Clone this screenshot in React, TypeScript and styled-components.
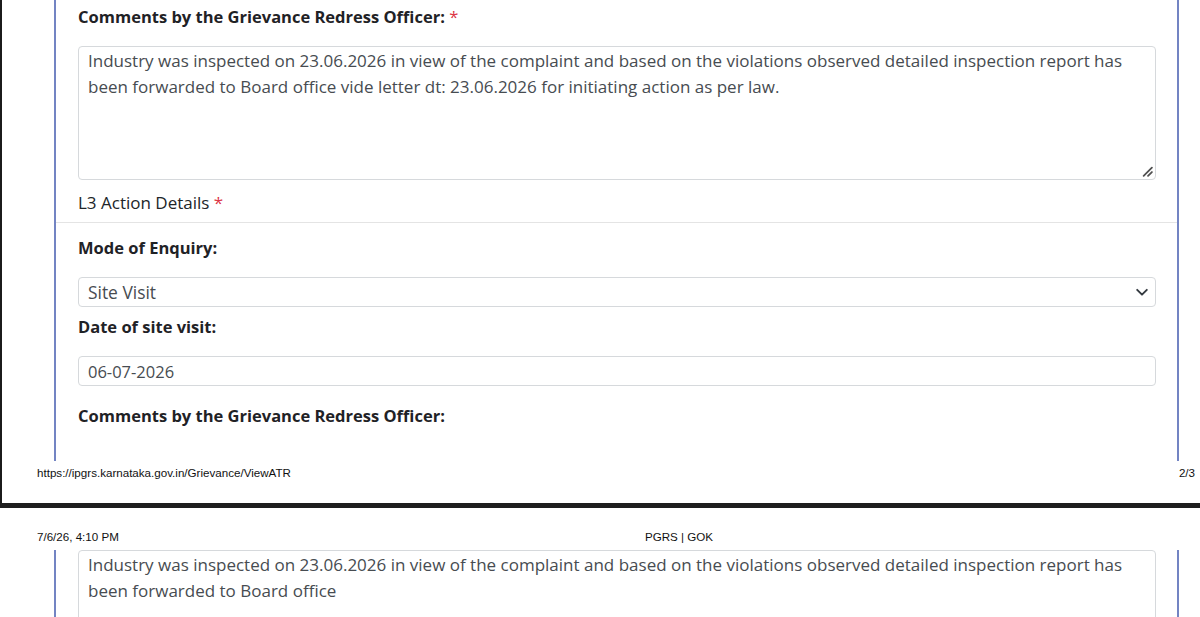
import React, { useState } from "react";
import styled, { createGlobalStyle } from "styled-components";

const GlobalStyle = createGlobalStyle`
    html, body {
        margin: 0;
        padding: 0;
        background: #ffffff;
    }
    #root {
        width: 1200px;
        height: 617px;
        overflow: hidden;
    }
`

const formFont = `"Open Sans", "Noto Sans", sans-serif`
const printFont = `"Liberation Sans", Arial, sans-serif`

const comment =
    "Industry was inspected on 23.06.2026 in view of the complaint and based on the violations observed detailed inspection report has been forwarded to Board office vide letter dt: 23.06.2026 for initiating action as per law."

const commentCut =
    "Industry was inspected on 23.06.2026 in view of the complaint and based on the violations observed detailed inspection report has been forwarded to Board office"

export default function App() {
    const [mode, setMode] = useState('site')
    const [visitDate, setVisitDate] = useState('06-07-2026')
    const [remark, setRemark] = useState(comment)

    return (
        <Viewer>
            <GlobalStyle />

            <PageTop>
                <Card>
                    <Label>
                        Comments by the Grievance Redress Officer: <Required>*</Required>
                    </Label>
                    <AreaWrap>
                        <TextArea
                            height={134}
                            value={remark}
                            onChange={(e) => setRemark(e.target.value)}
                        />
                        <Grip viewBox="0 0 10 10">
                            <path d="M9 1.5 1.5 9M9 5.5 5.5 9" />
                        </Grip>
                    </AreaWrap>

                    <CardHeader>
                        L3 Action Details <Required>*</Required>
                    </CardHeader>

                    <Label top={13}>Mode of Enquiry:</Label>
                    <SelectWrap>
                        <Select value={mode} onChange={(e) => setMode(e.target.value)}>
                            <option value="site">Site Visit</option>
                            <option value="phone">Phone Call</option>
                            <option value="office">Office Enquiry</option>
                        </Select>
                        <Chevron viewBox="0 0 16 16">
                            <path d="M2.5 5.5 8 11l5.5-5.5" />
                        </Chevron>
                    </SelectWrap>

                    <Label top={8}>Date of site visit:</Label>
                    <Input value={visitDate} onChange={(e) => setVisitDate(e.target.value)} />

                    <Label top={18}>Comments by the Grievance Redress Officer:</Label>
                </Card>

                <PrintFooter>
                    <span>https://ipgrs.karnataka.gov.in/Grievance/ViewATR</span>
                    <span>2/3</span>
                </PrintFooter>
            </PageTop>

            <PageBreak />

            <PageBottom>
                <PrintHeader>
                    <span>7/6/26, 4:10 PM</span>
                    <span>PGRS | GOK</span>
                </PrintHeader>
                <Card flush>
                    <TextArea height={120} defaultValue={commentCut} />
                </Card>
            </PageBottom>
        </Viewer>
    )
}


const Viewer = styled.div`
    display: flex;
    flex-direction: column;
    width: 1200px;
    height: 617px;
    background: #ffffff;
`

const PageTop = styled.div`
    display: flex;
    flex-direction: column;
    height: 503px;
    border-left: 2px solid #1b1b1b;
    box-sizing: border-box;
`

const PageBreak = styled.div`
    height: 5px;
    background: #1e1e1e;
    flex-shrink: 0;
`

const PageBottom = styled.div`
    display: flex;
    flex-direction: column;
    flex: 1;
    overflow: hidden;
`

const Card = styled.div<{ flush?: boolean }>`
    display: flex;
    flex-direction: column;
    margin-left: ${props => props.flush ? '54px' : '52px'};
    width: 1125px;
    height: ${props => props.flush ? 'auto' : '461px'};
    flex: ${props => props.flush ? '1' : 'none'};
    padding: ${props => props.flush ? '0' : '5px'} 21px 0 22px;
    box-sizing: border-box;
    border-left: 2px solid #7384c3;
    border-right: 2px solid #7384c3;
    overflow: hidden;
`

const Label = styled.label<{ top?: number }>`
    display: block;
    margin: ${props => props.top || 0}px 0 17px;
    font-family: ${formFont};
    font-size: 16.5px;
    font-weight: 700;
    line-height: 24px;
    color: #1f2226;
`

const Required = styled.span`
    color: #dc3545;
    font-weight: 400;
`

const CardHeader = styled.div`
    margin: 4px -21px 0 -22px;
    padding: 7px 22px;
    border-bottom: 1px solid #e4e4e4;
    font-family: ${formFont};
    font-size: 17px;
    line-height: 24px;
    color: #212529;
`

const AreaWrap = styled.div`
    position: relative;
    flex-shrink: 0;
`

const TextArea = styled.textarea<{ height: number }>`
    display: block;
    width: 100%;
    height: ${props => props.height}px;
    flex-shrink: 0;
    margin: 0;
    padding: 1px 9px;
    box-sizing: border-box;
    border: 1px solid #d6d9dc;
    border-radius: 4px;
    font-family: ${formFont};
    font-size: 17px;
    line-height: 26px;
    color: #474c51;
    background: #ffffff;
    resize: none;
    outline: none;
`

const Grip = styled.svg`
    position: absolute;
    right: 3px;
    bottom: 3px;
    width: 11px;
    height: 11px;
    fill: none;
    stroke: #505050;
    stroke-width: 1.6;
    stroke-linecap: round;
    pointer-events: none;
`

const SelectWrap = styled.div`
    position: relative;
    height: 30px;
    flex-shrink: 0;
`

const Select = styled.select`
    width: 100%;
    height: 30px;
    margin: 0;
    padding: 0 36px 0 9px;
    border: 1px solid #d6d9dc;
    border-radius: 4px;
    appearance: none;
    background: #ffffff;
    font-family: ${formFont};
    font-size: 17.4px;
    color: #474c51;
    outline: none;
`

const Chevron = styled.svg`
    position: absolute;
    right: 7px;
    top: 8px;
    width: 14px;
    height: 14px;
    fill: none;
    stroke: #343a40;
    stroke-width: 2.2;
    stroke-linecap: round;
    stroke-linejoin: round;
    pointer-events: none;
`

const Input = styled.input`
    display: block;
    width: 100%;
    height: 30px;
    flex-shrink: 0;
    margin: 0;
    padding: 0 9px;
    box-sizing: border-box;
    border: 1px solid #d6d9dc;
    border-radius: 4px;
    font-family: ${formFont};
    font-size: 16.5px;
    color: #474c51;
    outline: none;
`

const PrintFooter = styled.div`
    display: flex;
    justify-content: space-between;
    padding: 5px 5px 0 35px;
    font-family: ${printFont};
    font-size: 11.6px;
    line-height: 14px;
    color: #111111;
`

const PrintHeader = styled.div`
    display: grid;
    grid-template-columns: 608px auto;
    height: 42px;
    padding: 22px 0 0 37px;
    box-sizing: border-box;
    font-family: ${printFont};
    font-size: 11.6px;
    line-height: 14px;
    color: #111111;
`
